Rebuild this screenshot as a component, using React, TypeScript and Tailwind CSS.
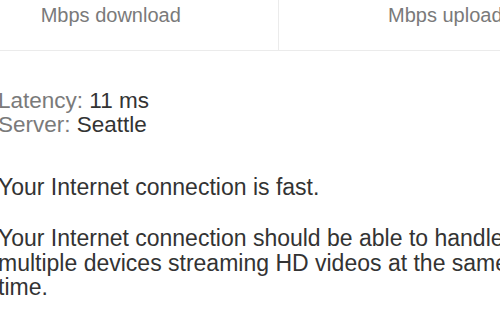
import React from "react";

export default function App() {
  return (
    <div
      className="w-[500px] h-[326px] overflow-hidden bg-white"
      style={{ fontFamily: '"Liberation Sans", Arial, sans-serif' }}
    >
      <div className="-ml-[56px] w-[668px] flex border-b border-[#ebebeb] h-[51px]">
        <div className="flex-1 flex justify-center pt-[2px] border-r border-[#ebebeb]">
          <span className="text-[20px] leading-[26px] text-[#7a7a7a]">Mbps download</span>
        </div>
        <div className="flex-1 flex justify-center pt-[2px]">
          <span className="text-[20px] leading-[26px] text-[#7a7a7a]">Mbps upload</span>
        </div>
      </div>
      <div className="-ml-[2px] w-[560px] pt-[38px] leading-[24px] text-[#333]">
        <div className="text-[22.5px]">
          <span className="text-[#7a7a7a]">Latency: </span>11 ms
        </div>
        <div className="text-[22.5px]">
          <span className="text-[#7a7a7a]">Server: </span>Seattle
        </div>
        <p className="mt-[38px] text-[23px]">Your Internet connection is fast.</p>
        <p className="mt-[27px] w-[530px] text-[23px] leading-[24.5px]">
          Your Internet connection should be able to handle multiple devices streaming HD videos at the same time.
        </p>
      </div>
    </div>
  );
}
